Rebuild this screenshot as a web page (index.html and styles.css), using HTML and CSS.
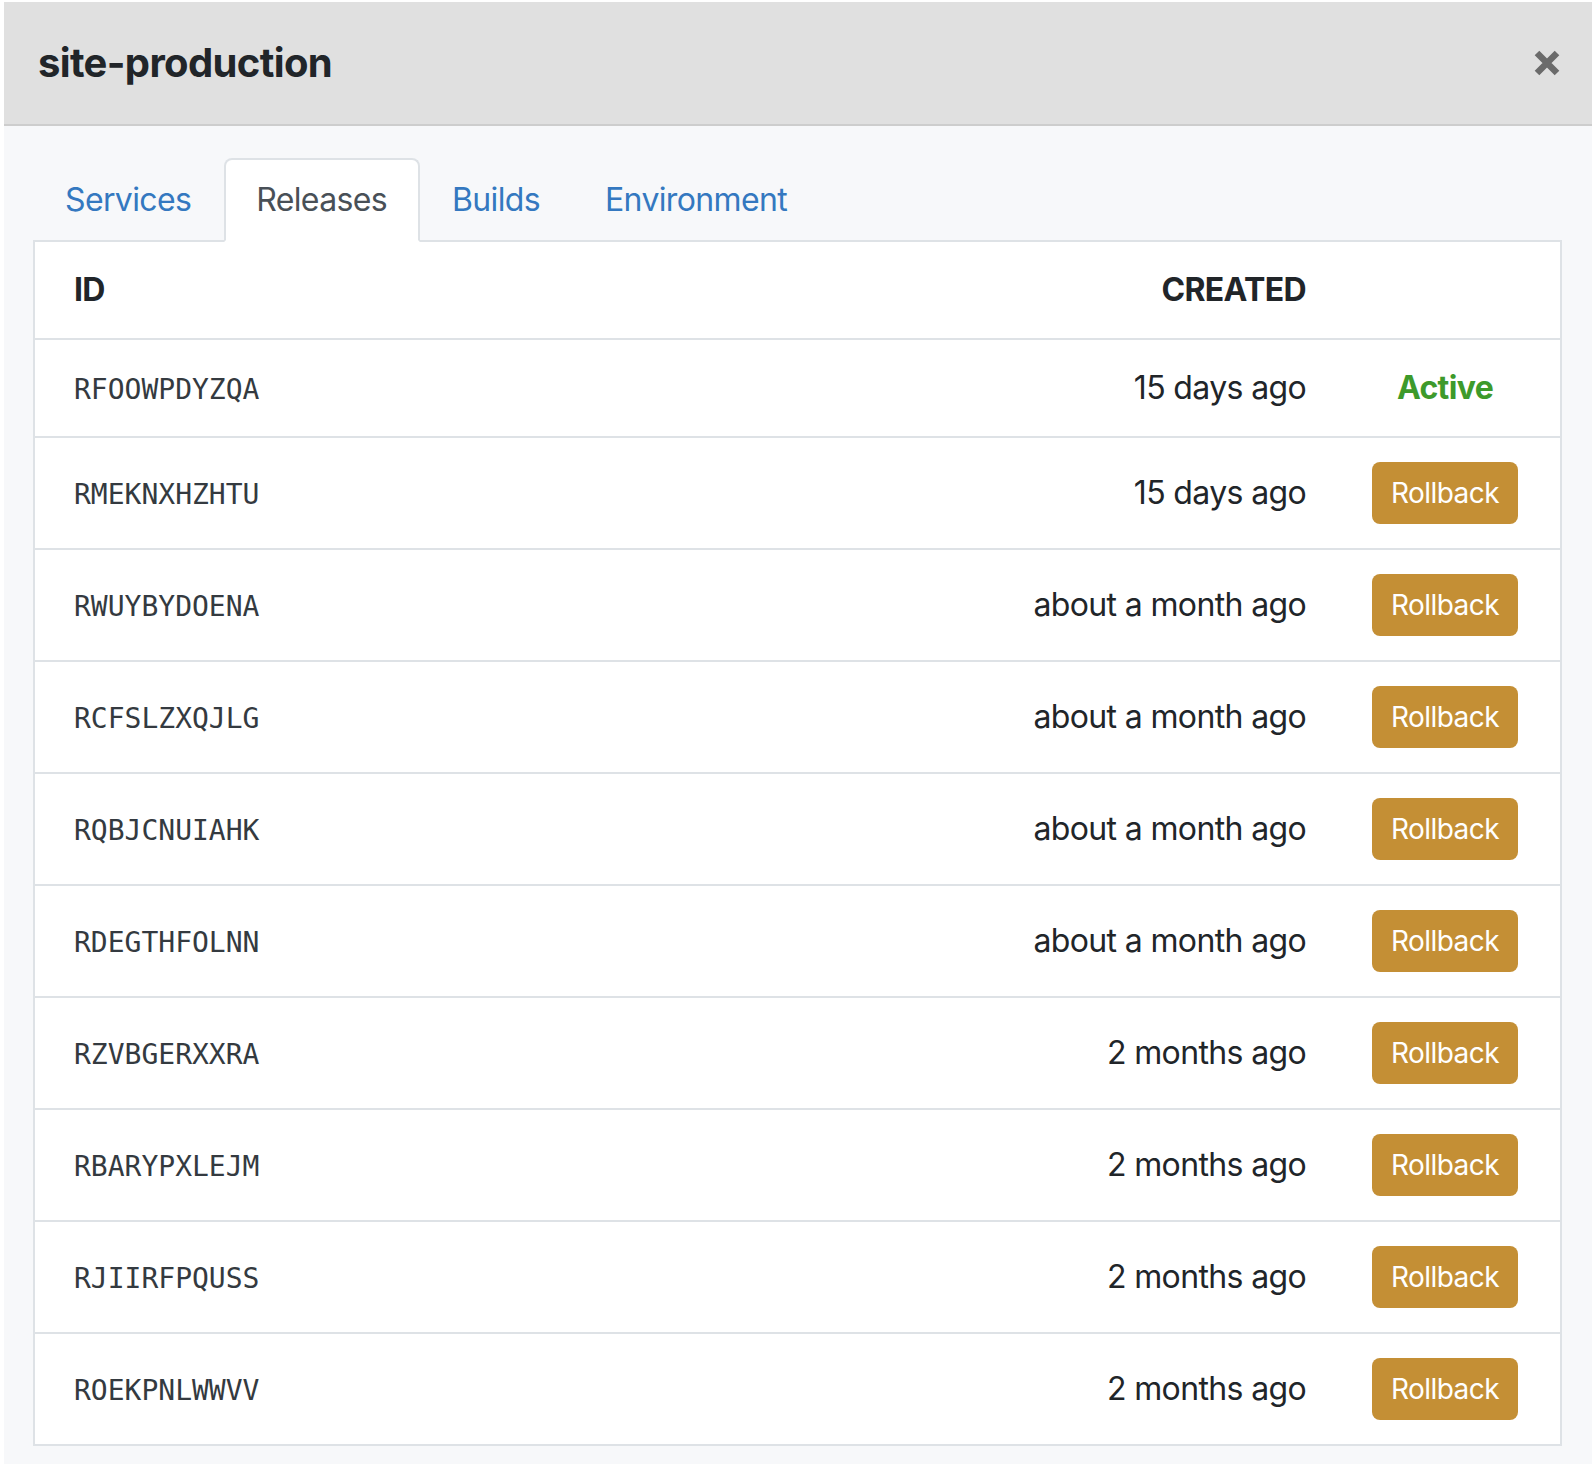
FILE: index.html
```html
<!DOCTYPE html>
<html lang="en">
<head>
<meta charset="utf-8">
<title>site-production</title>
<link rel="stylesheet" href="styles.css">
</head>
<body>
<div class="modal">
  <div class="modal-header">
    <h5 class="modal-title">site-production</h5>
    <button class="close" aria-label="Close">
      <svg width="26" height="26" viewBox="0 0 26 26"><path d="M3 3 L23 23 M23 3 L3 23" stroke="#6b6b6b" stroke-width="6.5" fill="none"/></svg>
    </button>
  </div>
  <div class="modal-body">
    <ul class="tabs">
      <li class="tab">Services</li>
      <li class="tab active">Releases</li>
      <li class="tab">Builds</li>
      <li class="tab">Environment</li>
    </ul>
    <div class="panel">
      <div class="row head">
        <div class="c-id">ID</div>
        <div class="c-created">CREATED</div>
        <div class="c-act"></div>
      </div>
      <div class="row">
        <div class="c-id mono">RFOOWPDYZQA</div>
        <div class="c-created">15 days ago</div>
        <div class="c-act"><span class="active-label">Active</span></div>
      </div>
      <div class="row">
        <div class="c-id mono">RMEKNXHZHTU</div>
        <div class="c-created">15 days ago</div>
        <div class="c-act"><button class="btn">Rollback</button></div>
      </div>
      <div class="row">
        <div class="c-id mono">RWUYBYDOENA</div>
        <div class="c-created">about a month ago</div>
        <div class="c-act"><button class="btn">Rollback</button></div>
      </div>
      <div class="row">
        <div class="c-id mono">RCFSLZXQJLG</div>
        <div class="c-created">about a month ago</div>
        <div class="c-act"><button class="btn">Rollback</button></div>
      </div>
      <div class="row">
        <div class="c-id mono">RQBJCNUIAHK</div>
        <div class="c-created">about a month ago</div>
        <div class="c-act"><button class="btn">Rollback</button></div>
      </div>
      <div class="row">
        <div class="c-id mono">RDEGTHFOLNN</div>
        <div class="c-created">about a month ago</div>
        <div class="c-act"><button class="btn">Rollback</button></div>
      </div>
      <div class="row">
        <div class="c-id mono">RZVBGERXXRA</div>
        <div class="c-created">2 months ago</div>
        <div class="c-act"><button class="btn">Rollback</button></div>
      </div>
      <div class="row">
        <div class="c-id mono">RBARYPXLEJM</div>
        <div class="c-created">2 months ago</div>
        <div class="c-act"><button class="btn">Rollback</button></div>
      </div>
      <div class="row">
        <div class="c-id mono">RJIIRFPQUSS</div>
        <div class="c-created">2 months ago</div>
        <div class="c-act"><button class="btn">Rollback</button></div>
      </div>
      <div class="row">
        <div class="c-id mono">ROEKPNLWWVV</div>
        <div class="c-created">2 months ago</div>
        <div class="c-act"><button class="btn">Rollback</button></div>
      </div>
    </div>
  </div>
</div>
</body>
</html>
```
FILE: styles.css
```css
* { box-sizing: border-box; }
html, body { margin: 0; padding: 0; background: #fff; }
body {
  font-family: Inter, "Noto Sans", "Liberation Sans", sans-serif;
  font-size: 32px;
  line-height: 48px;
  letter-spacing: -0.02em;
  color: #212529;
}
.modal {
  margin: 2px 2px 0 4px;
  background: #f7f8fa;
}
.modal-header {
  display: flex;
  align-items: center;
  justify-content: space-between;
  background: #e0e0e0;
  border-bottom: 2px solid #cdcdcd;
  padding: 31px 32px 31px 32px;
}
.modal-title {
  margin: 0;
  font-size: 40px;
  line-height: 60px;
  font-weight: 700;
  color: #212529;
  padding-left: 2px;
}
.close {
  border: 0;
  background: transparent;
  padding: 0;
  width: 26px;
  height: 26px;
  display: flex;
}
.modal-body {
  padding: 32px 30px 18px 29px;
}
.tabs {
  list-style: none;
  margin: 0;
  padding: 0;
  display: flex;
  border-bottom: 2px solid #dee2e6;
}
.tab {
  padding: 16px 31px 16px 30px;
  border: 2px solid transparent;
  border-radius: 8px 8px 0 0;
  margin-bottom: -2px;
  color: #3478c0;
}
.tab.active {
  color: #495057;
  background: #fff;
  border-color: #dee2e6 #dee2e6 #fff;
}
.panel {
  background: #fff;
  border: 2px solid #dee2e6;
  border-top: 0;
}
.row {
  display: flex;
  align-items: center;
  border-top: 2px solid #dee2e6;
}
.row.head { border-top: 0; font-weight: 700; text-transform: uppercase; }
.c-id {
  flex: 1;
  padding: 24px 24px 24px 39px;
}
.c-created {
  padding: 24px 24px;
  text-align: right;
}
.c-act {
  width: 230px;
  padding: 24px;
  display: flex;
  justify-content: center;
}
.mono {
  font-family: "DejaVu Sans Mono", "Liberation Mono", monospace;
  font-size: 28px;
  letter-spacing: 0;
  color: #343a40;
  position: relative;
  top: 2px;
}
.active-label {
  color: #3d9a2b;
  font-weight: 700;
}
.btn {
  font-family: inherit;
  font-size: 28px;
  letter-spacing: -0.02em;
  line-height: 42px;
  padding: 10px 19px;
  height: 62px;
  border: 0;
  border-radius: 8px;
  background: #c48f35;
  color: #fff;
}
```
